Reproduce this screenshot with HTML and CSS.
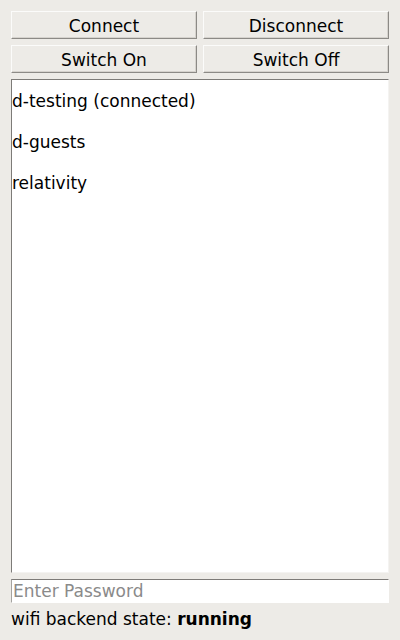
FILE: index.html
```html
<!DOCTYPE html>
<html>
<head>
<meta charset="utf-8">
<link rel="stylesheet" href="styles.css">
</head>
<body>
<div class="app">
  <div class="buttons">
    <button class="btn">Connect</button>
    <button class="btn">Disconnect</button>
    <button class="btn">Switch On</button>
    <button class="btn">Switch Off</button>
  </div>
  <ul class="list">
    <li class="item">d-testing (connected)</li>
    <li class="item">d-guests</li>
    <li class="item">relativity</li>
  </ul>
  <input class="password" type="password" placeholder="Enter Password">
  <div class="status">wifi backend state: <b>running</b></div>
</div>
</body>
</html>
```
FILE: styles.css
```css
html, body {
  margin: 0;
  padding: 0;
  background: #edebe7;
}
body {
  font-family: "DejaVu Sans", sans-serif;
  font-size: 17px;
  color: #000;
}
.app {
  width: 400px;
  height: 640px;
  box-sizing: border-box;
  padding: 11px 11px 0 11px;
  display: flex;
  flex-direction: column;
}
.buttons {
  display: grid;
  grid-template-columns: 1fr 1fr;
  column-gap: 6px;
  row-gap: 6px;
}
.btn {
  font-family: "DejaVu Sans", sans-serif;
  font-size: 17px;
  height: 28px;
  margin: 0;
  padding: 2px 0 0 0;
  background: #edebe7;
  color: #000;
  border: 1px solid;
  border-color: #fbfbfa #8c8a86 #8c8a86 #fbfbfa;
  box-shadow: inset -1px -1px 0 #d6d3ce;
}
.list {
  list-style: none;
  margin: 6px 0 0 0;
  padding: 0;
  height: 494px;
  box-sizing: border-box;
  background: #fff;
  border: 1px solid;
  border-color: #7d7b78 #f4f3f1 #f4f3f1 #7d7b78;
}
.item {
  height: 41px;
  box-sizing: border-box;
  padding-top: 2px;
  line-height: 39px;
  white-space: nowrap;
}
.password {
  margin: 6px 0 0 0;
  height: 24px;
  box-sizing: border-box;
  padding: 0 1px;
  font-family: "DejaVu Sans", sans-serif;
  font-size: 17px;
  background: #fff;
  border: 1px solid;
  border-color: #7d7b78 #fff #fff #a5a39f;
  outline: none;
}
.password::placeholder {
  color: #8a8a8a;
}
.status {
  margin-top: 6px;
  line-height: 20px;
}
```
